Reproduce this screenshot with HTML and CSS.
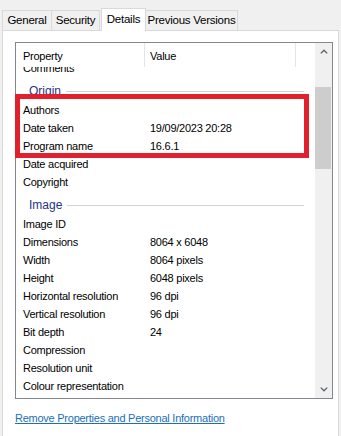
FILE: index.html
```html
<!DOCTYPE html>
<html lang="en">
<head>
    <meta charset="UTF-8">
    <meta name="viewport" content="width=device-width, initial-scale=1.0">
    <title>Details</title>
    <link rel="stylesheet" href="styles.css">
</head>
<body>
    <div class="tabs">
        <div class="tab general">General</div>
        <div class="tab security">Security</div>
        <div class="tab details active">Details</div>
        <div class="tab versions">Previous Versions</div>
    </div>

    <div class="panel">
        <div class="listbox">
            <div class="list-main">
                <div class="list-head">
                    <div class="hcol prop">Property</div>
                    <div class="hcol val">Value</div>
                    <div class="hcol rest"></div>
                </div>
                <div class="list-body">
                    <div class="rows">
                        <div class="row"><span class="name">Comments</span><span class="value"></span></div>
                        <div class="group"><span>Origin</span><i></i></div>
                        <div class="row"><span class="name">Authors</span><span class="value"></span></div>
                        <div class="row"><span class="name">Date taken</span><span class="value">19/09/2023 20:28</span></div>
                        <div class="row"><span class="name">Program name</span><span class="value">16.6.1</span></div>
                        <div class="row"><span class="name">Date acquired</span><span class="value"></span></div>
                        <div class="row"><span class="name">Copyright</span><span class="value"></span></div>
                        <div class="group"><span>Image</span><i></i></div>
                        <div class="row"><span class="name">Image ID</span><span class="value"></span></div>
                        <div class="row"><span class="name">Dimensions</span><span class="value">8064 x 6048</span></div>
                        <div class="row"><span class="name">Width</span><span class="value">8064 pixels</span></div>
                        <div class="row"><span class="name">Height</span><span class="value">6048 pixels</span></div>
                        <div class="row"><span class="name">Horizontal resolution</span><span class="value">96 dpi</span></div>
                        <div class="row"><span class="name">Vertical resolution</span><span class="value">96 dpi</span></div>
                        <div class="row"><span class="name">Bit depth</span><span class="value">24</span></div>
                        <div class="row"><span class="name">Compression</span><span class="value"></span></div>
                        <div class="row"><span class="name">Resolution unit</span><span class="value"></span></div>
                        <div class="row"><span class="name">Colour representation</span><span class="value"></span></div>
                    </div>
                </div>
            </div>
            <div class="scrollbar">
                <div class="arrow">
                    <svg width="8" height="5" viewBox="0 0 8 5"><path d="M0.8 4.4 L4 1.2 L7.2 4.4" fill="none" stroke="#5f5f5f" stroke-width="1.3"/></svg>
                </div>
                <div class="track"><div class="thumb"></div></div>
                <div class="arrow">
                    <svg width="8" height="5" viewBox="0 0 8 5"><path d="M0.8 0.6 L4 3.8 L7.2 0.6" fill="none" stroke="#5f5f5f" stroke-width="1.3"/></svg>
                </div>
            </div>
            <!-- red annotation round the origin rows -->
            <div class="highlight"></div>
        </div>

        <a class="remove-link" href="#">Remove Properties and Personal Information</a>
    </div>
</body>
</html>
```

FILE: styles.css
```css
:root {
    --bg-color: #f0f0f0;
    --panel-bg: #ffffff;
    --tab-border: #d9d9d9;
    --list-border: #828790;
    --divider: #e5e5e5;
    --group-text: #1e3287;
    --group-line: #d2d2d2;
    --thumb: #cdcdcd;
    --link: #1a6fb8;
    --mark: #e11f2d;
}

body {
    font-family: 'Liberation Sans', Arial, sans-serif;
    font-size: 11px;
    letter-spacing: -0.25px;
    margin: 0;
    padding: 0;
    background-color: var(--bg-color);
    color: #000;
    height: 436px;
    overflow: hidden;
}

.tabs {
    display: flex;
    align-items: flex-end;
    height: 30px;
    padding-left: 2px;
    position: relative;
    z-index: 1;
}

.tab {
    height: 20px;
    line-height: 19px;
    border: 1px solid var(--tab-border);
    border-bottom: none;
    background-color: var(--bg-color);
    box-sizing: border-box;
    text-align: center;
    margin-left: -1px;
    font-size: 11.5px;
}

.tab.general {
    width: 50px;
    margin-left: 0;
}

.tab.security {
    width: 49px;
}

.tab.details {
    width: 45px;
}

.tab.versions {
    width: 93px;
}

.tab.active {
    height: 23px;
    line-height: 21px;
    background-color: var(--panel-bg);
    margin: 0 0 -1px 1px;
    position: relative;
    z-index: 1;
}

.panel {
    background-color: var(--panel-bg);
    border: 1px solid var(--tab-border);
    border-bottom: none;
    margin: 0 2px;
    padding: 11px 12px 0;
    height: 394px;
}

.listbox {
    position: relative;
    display: flex;
    width: 318px;
    height: 357px;
    border: 1px solid var(--list-border);
    box-sizing: border-box;
}

.list-main {
    flex: 1;
    display: flex;
    flex-direction: column;
    min-width: 0;
}

.list-head {
    display: flex;
    height: 24px;
    flex-shrink: 0;
    background-color: var(--panel-bg);
}

.hcol {
    line-height: 26px;
    height: 24px;
    box-sizing: border-box;
    padding-left: 7px;
    border-right: 1px solid var(--divider);
}

.hcol.prop {
    width: 129px;
}

.hcol.val {
    width: 151px;
    padding-left: 5px;
}

.hcol.rest {
    flex: 1;
    border-right: none;
}

.list-body {
    flex: 1;
    overflow: hidden;
}

/* list is scrolled a little: the Comments row sits half under the header */
.rows {
    margin-top: -8px;
}

.row {
    display: flex;
    height: 18px;
    line-height: 18px;
}

.row .name {
    width: 129px;
    padding-left: 7px;
    box-sizing: border-box;
    white-space: nowrap;
}

.row .value {
    padding-left: 5px;
}

.group {
    display: flex;
    align-items: center;
    height: 18px;
    padding: 5px 11px 1px 13px;
    color: var(--group-text);
    font-size: 12px;
    letter-spacing: 0;
}

.group i {
    flex: 1;
    height: 1px;
    margin-left: 5px;
    background-color: var(--group-line);
}

.scrollbar {
    width: 17px;
    display: flex;
    flex-direction: column;
    background-color: var(--bg-color);
}

.arrow {
    height: 17px;
    display: flex;
    align-items: center;
    justify-content: center;
}

.track {
    flex: 1;
    padding-top: 27px;
}

.thumb {
    height: 82px;
    margin: 0 1px 0 0;
    background-color: var(--thumb);
}

.highlight {
    position: absolute;
    left: -1px;
    top: 51px;
    width: 294px;
    height: 64px;
    border: 5px solid var(--mark);
    box-sizing: border-box;
}

.remove-link {
    display: inline-block;
    margin-top: 10px;
    line-height: 18px;
    font-size: 11px;
    color: var(--link);
    text-decoration: underline;
}
```
